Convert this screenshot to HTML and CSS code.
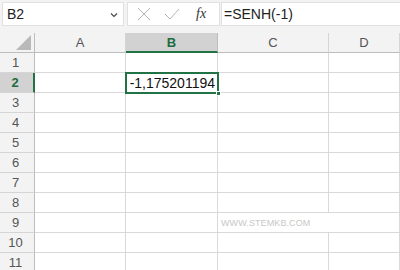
FILE: index.html
```html
<!DOCTYPE html>
<html>
<head>
<meta charset="utf-8">
<link rel="stylesheet" href="styles.css">
</head>
<body>
<div class="app">
  <div class="fbar">
    <div class="namebox"><span>B2</span>
      <svg class="chev" width="8" height="6" viewBox="0 0 8 6"><path d="M1 1.5 L4 4.5 L7 1.5" fill="none" stroke="#444" stroke-width="1.1"/></svg>
    </div>
    <div class="dots"></div>
    <div class="fxbox">
      <svg width="14" height="14" viewBox="0 0 14 14"><path d="M1 1 L13 13 M13 1 L1 13" stroke="#b4b4b4" stroke-width="1"/></svg>
      <svg width="16" height="14" viewBox="0 0 16 14"><path d="M1 7 L6 12 L15 2" fill="none" stroke="#b4b4b4" stroke-width="1"/></svg>
      <span class="fx">fx</span>
    </div>
    <div class="formula">=SENH(-1)</div>
  </div>
  <div class="grid">
    <div class="corner"><div class="tri"></div></div>
    <div class="ch">A</div>
    <div class="ch sel">B</div>
    <div class="ch">C</div>
    <div class="ch">D</div>

    <div class="rh">1</div><div class="c"></div><div class="c"></div><div class="c"></div><div class="c"></div>
    <div class="rh sel">2</div><div class="c"></div><div class="c active">-1,175201194<span class="handle"></span></div><div class="c"></div><div class="c"></div>
    <div class="rh">3</div><div class="c"></div><div class="c"></div><div class="c"></div><div class="c"></div>
    <div class="rh">4</div><div class="c"></div><div class="c"></div><div class="c"></div><div class="c"></div>
    <div class="rh">5</div><div class="c"></div><div class="c"></div><div class="c"></div><div class="c"></div>
    <div class="rh">6</div><div class="c"></div><div class="c"></div><div class="c"></div><div class="c"></div>
    <div class="rh">7</div><div class="c"></div><div class="c"></div><div class="c"></div><div class="c"></div>
    <div class="rh">8</div><div class="c"></div><div class="c"></div><div class="c"></div><div class="c"></div>
    <div class="rh">9</div><div class="c"></div><div class="c"></div><div class="c span2"><span class="wm">WWW.STEMKB.COM</span></div>
    <div class="rh">10</div><div class="c"></div><div class="c"></div><div class="c"></div><div class="c"></div>
    <div class="rh">11</div><div class="c"></div><div class="c"></div><div class="c"></div><div class="c"></div>
  </div>
</div>
</body>
</html>
```
FILE: styles.css
```css
* { box-sizing: border-box; }
html, body { margin: 0; padding: 0; background: #fff; }
body { width: 400px; height: 270px; overflow: hidden; font-family: "Liberation Sans", Arial, sans-serif; }
.app { width: 400px; }
.fbar {
  height: 33px;
  background: #f3f3f3;
  display: flex;
  align-items: flex-start;
  padding: 2px 0 0 2px;
}
.namebox {
  width: 122px; height: 24px;
  background: #fff;
  border: 1px solid #e1e1e1;
  display: flex; align-items: center; justify-content: space-between;
  padding: 0 5px 0 4px;
  font-size: 14px; color: #222;
}
.chev { margin-top: 1px; }
.dots { width: 3px; }
.fxbox {
  width: 93px; height: 24px;
  background: #fff;
  border: 1px solid #e1e1e1;
  display: flex; align-items: center;
  padding: 0 0 0 9px;
  gap: 13px;
}
.fx { font-family: "Liberation Serif", serif; font-style: italic; font-size: 14px; color: #333; margin-left: 3px; }
.formula {
  flex: 1; height: 24px; margin-left: 1px;
  background: #fff;
  border: 1px solid #e1e1e1;
  border-right: none;
  font-size: 14px; color: #222;
  padding: 3px 0 0 2px;
}
.grid {
  display: grid;
  grid-template-columns: 35px 91px 92px 111px 71px;
  grid-auto-rows: 20px;
}
.corner {
  background: #f3f3f3;
  border-right: 1px solid #bdbdbd;
  border-bottom: 1px solid #bdbdbd;
  position: relative;
}
.tri {
  position: absolute; right: 3px; bottom: 2px;
  width: 0; height: 0;
  border-left: 15px solid transparent;
  border-bottom: 15px solid #b9b9b9;
}
.ch {
  background: #f3f3f3;
  border-right: 1px solid #d5d5d5;
  border-bottom: 1px solid #bdbdbd;
  display: flex; align-items: center; justify-content: center;
  font-size: 13px; color: #555;
}
.ch.sel {
  background: #d2d2d2; color: #1e6b41; font-weight: bold;
  border-bottom: 2px solid #217346;
  border-right-color: #bdbdbd;
}
.rh {
  background: #f3f3f3;
  border-right: 1px solid #bdbdbd;
  border-bottom: 1px solid #d5d5d5;
  display: flex; align-items: center; justify-content: center;
  padding-right: 3px;
  font-size: 13px; color: #555;
}
.rh.sel {
  background: #d2d2d2; color: #1e6b41; font-weight: bold;
  border-right: 2px solid #217346;
}
.c {
  border-right: 1px solid #d9d9d9;
  border-bottom: 1px solid #d9d9d9;
  background: #fff;
}
.c.span2 { grid-column: span 2; display: flex; align-items: center; }
.active {
  position: relative;
  outline: 2px solid #217346;
  outline-offset: -1px;
  font-size: 14px; color: #111;
  text-align: right;
  padding: 2px 2px 0 0;
  z-index: 1;
}
.handle {
  position: absolute; right: -4px; bottom: -4px;
  width: 5px; height: 5px;
  background: #217346; border: 1px solid #fff;
}
.wm { font-size: 9px; color: #c8c8c8; padding-left: 3px; letter-spacing: 0.1px; }
```
